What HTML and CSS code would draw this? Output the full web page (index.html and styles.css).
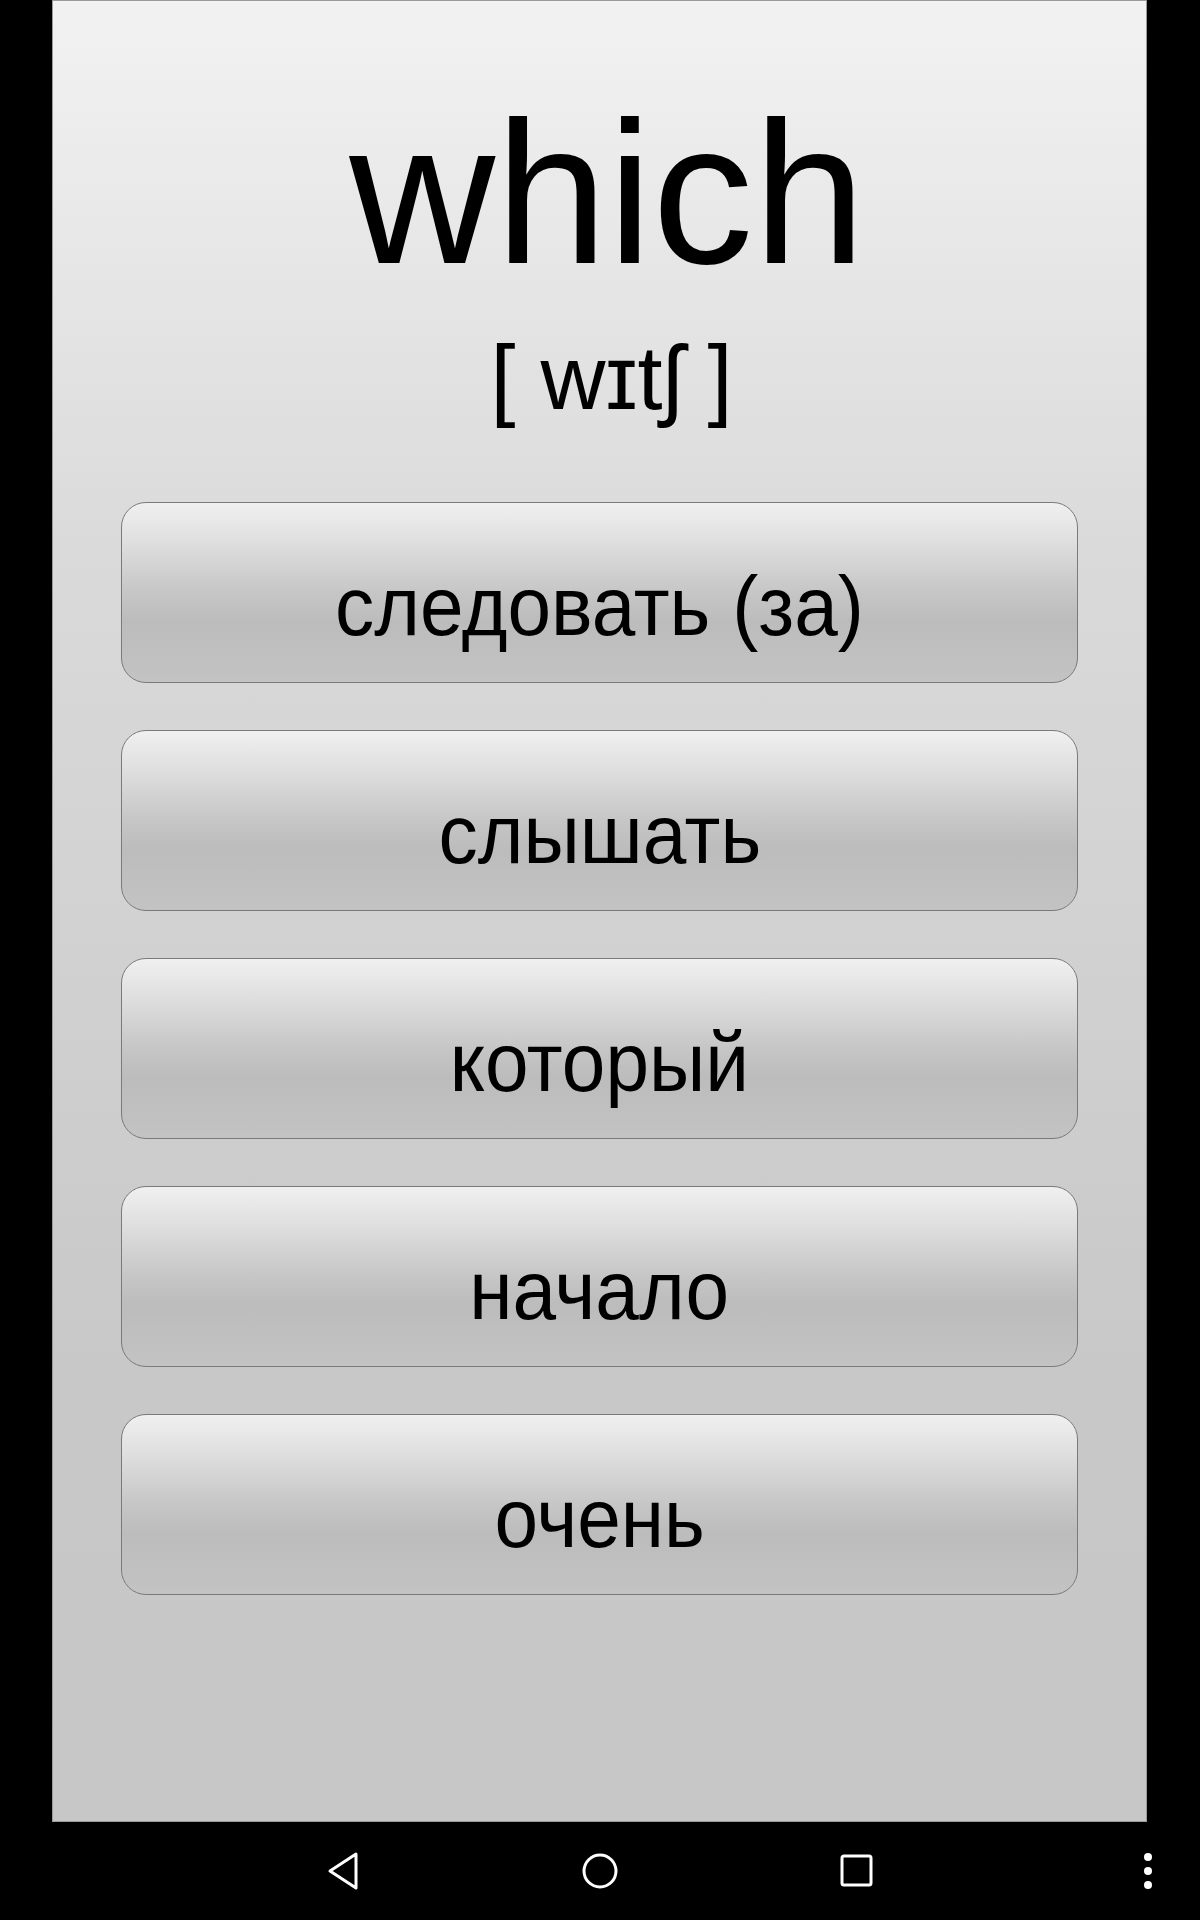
FILE: index.html
```html
<!DOCTYPE html>
<html lang="en">
<head>
    <meta charset="UTF-8">
    <meta name="viewport" content="width=device-width, initial-scale=1.0">
    <title>which</title>
    <link rel="stylesheet" href="styles.css">
</head>
<body>

<div class="screen">
    <div class="card">
        <div class="word">which</div>
        <div class="transcription">[ wɪtʃ ]</div>

        <div class="answers">
            <button class="answer"><span>следовать (за)</span></button>
            <button class="answer"><span>слышать</span></button>
            <button class="answer"><span>который</span></button>
            <button class="answer"><span>начало</span></button>
            <button class="answer"><span>очень</span></button>
        </div>
    </div>

    <div class="navbar">
        <div class="nav-keys">
            <!-- back -->
            <span class="nav-key">
                <svg width="40" height="40" viewBox="0 0 40 40">
                    <path d="M33 3 L33 37 L7 20 Z" fill="none" stroke="#fff" stroke-width="3" stroke-linejoin="round"/>
                </svg>
            </span>
            <!-- home -->
            <span class="nav-key">
                <svg width="40" height="40" viewBox="0 0 40 40">
                    <circle cx="20" cy="20" r="16" fill="none" stroke="#fff" stroke-width="3"/>
                </svg>
            </span>
            <!-- recents -->
            <span class="nav-key">
                <svg width="40" height="40" viewBox="0 0 40 40">
                    <rect x="5" y="5" width="29" height="29" rx="2" fill="none" stroke="#fff" stroke-width="3"/>
                </svg>
            </span>
        </div>
        <span class="nav-menu">
            <svg width="10" height="40" viewBox="0 0 10 40">
                <circle cx="5" cy="6" r="4" fill="#fff"/>
                <circle cx="5" cy="20" r="4" fill="#fff"/>
                <circle cx="5" cy="34" r="4" fill="#fff"/>
            </svg>
        </span>
    </div>
</div>

</body>
</html>
```

FILE: styles.css
```css
body {
    margin: 0;
    padding: 0;
    background-color: #000;
    font-family: "Liberation Sans", Arial, sans-serif;
    color: #000;
}

.screen {
    display: flex;
    flex-direction: column;
    height: 1920px;
}

/* main card with the word and the answer buttons */
.card {
    height: 1822px;
    margin: 0 53px 0 52px;
    box-sizing: border-box;
    border: 1px solid #9a9a9a;
    background: linear-gradient(to bottom, #f2f2f2 0%, #dadada 30%, #c8c8c8 75%, #c7c7c7 100%);
    padding-top: 91px;
    display: flex;
    flex-direction: column;
    align-items: center;
}

.word {
    font-size: 202px;
    line-height: 1;
    padding-left: 16px;
}

.transcription {
    font-size: 90px;
    line-height: 1;
    margin-top: 39px;
    padding-left: 24px;
}

.answers {
    align-self: stretch;
    display: flex;
    flex-direction: column;
    gap: 47px;
    margin: 79px 68px 0;
}

.answer {
    height: 181px;
    box-sizing: border-box;
    border: 1px solid #7a7a7a;
    border-radius: 25px;
    background: linear-gradient(to bottom, #f0f0f0 0%, #dcdcdc 25%, #c6c6c6 50%, #bcbcbc 66%, #c3c3c3 100%);
    padding: 27px 0 0;
    display: flex;
    align-items: center;
    justify-content: center;
    font-family: "Liberation Sans", Arial, sans-serif;
    font-size: 84px;
    line-height: 1;
    color: #000;
}

/* the label face is a little narrower than Liberation Sans */
.answer span {
    display: inline-block;
    transform: scaleX(0.933);
}

/* system navigation bar */
.navbar {
    flex: 1;
    position: relative;
    display: flex;
    align-items: center;
    justify-content: center;
}

.nav-keys {
    display: flex;
    gap: 177px;
}

.nav-key {
    width: 80px;
    display: flex;
    justify-content: center;
}

.nav-menu {
    position: absolute;
    right: 47px;
    top: 29px;
}
```
